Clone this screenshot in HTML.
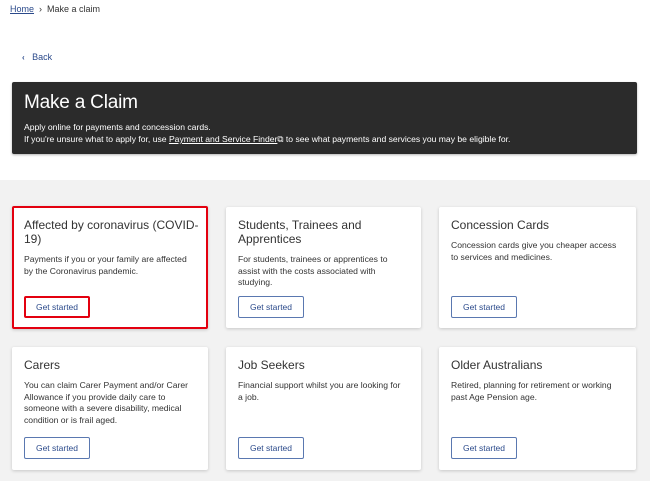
<!DOCTYPE html>
<html><head><style>
*{margin:0;padding:0;box-sizing:border-box}
body{width:650px;height:481px;overflow:hidden;background:#fff;font-family:"Liberation Sans",sans-serif;color:#333;position:relative}
.a{position:absolute}
.bc{left:10px;top:4px;font-size:9px;color:#333}
.bc u{color:#2b4a8b}
.back{left:22px;top:52px;font-size:9px;color:#2b4a8b}
.hd{left:12px;top:82px;width:625px;height:72px;background:#2b2b2b;border-radius:2px;box-shadow:0 1px 2px rgba(0,0,0,.3);color:#fff}
.hd h1{position:absolute;left:12px;top:10px;font-size:19px;font-weight:normal;letter-spacing:-0.2px}
.hd p{position:absolute;left:12px;top:39px;font-size:8.6px;line-height:12px;white-space:nowrap}
.gray{left:0;top:180px;width:650px;height:301px;background:#f2f2f2}
.card{background:#fff;box-shadow:0 1px 3px rgba(0,0,0,.18);border-radius:2px}
.card h2{position:absolute;left:12px;top:11px;font-size:12px;font-weight:normal;line-height:14px;color:#333;white-space:nowrap}
.card p{position:absolute;left:12px;font-size:8.6px;line-height:11.5px;color:#333;white-space:nowrap}
.btn{position:absolute;left:12px;width:66px;height:22px;border:1px solid #5a78b0;border-radius:2px;font-size:8.5px;color:#2b4a8b;text-align:center;line-height:20px}
</style></head><body>
<div class="a bc"><u>Home</u> &nbsp;›&nbsp; Make a claim</div>
<div class="a back"><b style="font-size:8px">‹</b>&nbsp;&nbsp; Back</div>
<div class="a hd"><h1>Make a Claim</h1><p>Apply online for payments and concession cards.<br>If you're unsure what to apply for, use <u>Payment and Service Finder</u>⧉ to see what payments and services you may be eligible for.</p></div>
<div class="a gray"></div>

<div class="a card" style="left:12px;top:206px;width:196px;height:123px;border:2px solid #e3000f"><h2 style="left:10px;top:10px">Affected by coronavirus (COVID-<br>19)</h2><p style="top:46px;left:10px">Payments if you or your family are affected<br>by the Coronavirus pandemic.</p><div class="btn" style="top:88px;left:10px;border:2px solid #e3000f;line-height:18px">Get started</div></div>
<div class="a card" style="left:226px;top:207px;width:195px;height:121px"><h2>Students, Trainees and<br>Apprentices</h2><p style="top:47px">For students, trainees or apprentices to<br>assist with the costs associated with<br>studying.</p><div class="btn" style="top:89px">Get started</div></div>
<div class="a card" style="left:439px;top:207px;width:197px;height:121px"><h2>Concession Cards</h2><p style="top:33px">Concession cards give you cheaper access<br>to services and medicines.</p><div class="btn" style="top:89px">Get started</div></div>

<div class="a card" style="left:12px;top:347px;width:196px;height:123px"><h2>Carers</h2><p style="top:33px">You can claim Carer Payment and/or Carer<br>Allowance if you provide daily care to<br>someone with a severe disability, medical<br>condition or is frail aged.</p><div class="btn" style="top:90px">Get started</div></div>
<div class="a card" style="left:226px;top:347px;width:195px;height:123px"><h2>Job Seekers</h2><p style="top:33px">Financial support whilst you are looking for<br>a job.</p><div class="btn" style="top:90px">Get started</div></div>
<div class="a card" style="left:439px;top:347px;width:197px;height:123px"><h2>Older Australians</h2><p style="top:33px">Retired, planning for retirement or working<br>past Age Pension age.</p><div class="btn" style="top:90px">Get started</div></div>
</body></html>
